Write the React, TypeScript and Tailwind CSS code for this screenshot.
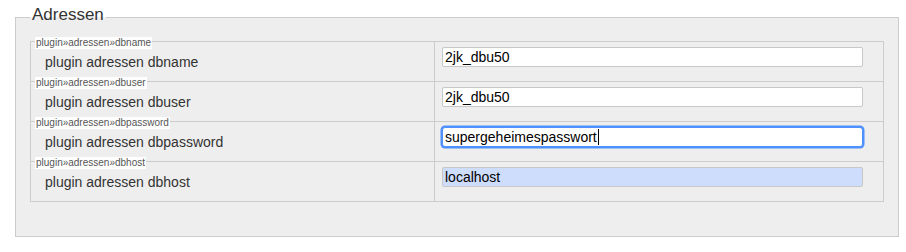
import React from "react";

const rows = [
  { key: "plugin»adressen»dbname", label: "plugin adressen dbname", value: "2jk_dbu50", state: "normal" },
  { key: "plugin»adressen»dbuser", label: "plugin adressen dbuser", value: "2jk_dbu50", state: "normal" },
  { key: "plugin»adressen»dbpassword", label: "plugin adressen dbpassword", value: "supergeheimespasswort", state: "focus" },
  { key: "plugin»adressen»dbhost", label: "plugin adressen dbhost", value: "localhost", state: "auto" },
];

export default function App() {
  return (
    <div className="bg-white w-[906px] h-[252px] pt-[5px] font-['Liberation_Sans',Arial,sans-serif]">
      <fieldset className="ml-[15px] w-[884px] border border-[#cccccc] bg-[#eeeeee] px-[14px] pb-[34px]">
        <legend className="px-[2px] pb-[4px] text-[17px] leading-[20px] text-[#333]">Adressen</legend>
        <div className="mt-[12px] border-x border-b border-[#cccccc]">
          {rows.map((r) => (
            <div key={r.key} className="relative grid h-[40px] grid-cols-[403px_1fr] border-t border-[#cccccc]">
              <span className="absolute left-[4px] top-[-5px] bg-white px-px text-[10px] leading-[12px] text-[#555]">
                {r.key}
              </span>
              <div className="pl-[14px] pt-[12px] text-[14px] leading-[16px] text-[#333]">{r.label}</div>
              <div className="border-l border-[#cccccc] pl-[7px] pt-[5px]">
                <div
                  className={
                    r.state === "focus"
                      ? "flex h-[20px] w-[421px] items-center rounded-[3px] border border-[#4d90fe] bg-white pl-[2px] text-[14px] leading-[16px] text-black shadow-[0_0_0_1.5px_#4d90fe]"
                      : r.state === "auto"
                      ? "flex h-[20px] w-[421px] items-center rounded-[2px] border border-[#c8c8c8] bg-[#cfddfc] pl-[2px] text-[14px] leading-[16px] text-black"
                      : "flex h-[20px] w-[421px] items-center rounded-[2px] border border-[#c8c8c8] bg-white pl-[2px] text-[14px] leading-[16px] text-black"
                  }
                >
                  <span>{r.value}</span>
                  {r.state === "focus" && <span className="ml-px inline-block h-[16px] w-px bg-black" />}
                </div>
              </div>
            </div>
          ))}
        </div>
      </fieldset>
    </div>
  );
}
